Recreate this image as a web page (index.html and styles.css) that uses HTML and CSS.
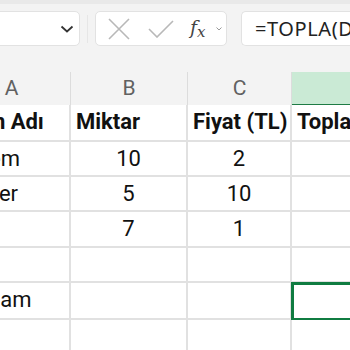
FILE: index.html
```html
<!DOCTYPE html>
<html>
<head>
    <title>Sheet</title>
    <link rel="stylesheet" href="styles.css">
</head>
<body>
    <div class="app">
        <div class="toolbar">
            <div class="name-box">
                <svg class="chevron" width="14" height="8" viewBox="0 0 14 8">
                    <path d="M1.5 1.5 L7 6.5 L12.5 1.5" fill="none" stroke="#333" stroke-width="1.8"/>
                </svg>
            </div>
            <div class="separator"></div>
            <div class="fx-buttons">
                <svg width="22" height="22" viewBox="0 0 22 22">
                    <path d="M1 1 L21 21 M21 1 L1 21" stroke="#b8b8b8" stroke-width="1.6"/>
                </svg>
                <svg class="check" width="26" height="18" viewBox="0 0 26 18">
                    <path d="M1 9 L9 17 L25 1" fill="none" stroke="#b8b8b8" stroke-width="1.6"/>
                </svg>
                <span class="fx">f<sub>x</sub></span>
                <svg class="mini" width="6" height="4" viewBox="0 0 6 4">
                    <path d="M0.5 0.5 L3 3 L5.5 0.5" fill="none" stroke="#999" stroke-width="1"/>
                </svg>
            </div>
            <div class="formula">=TOPLA(D</div>
        </div>

        <div class="sheet">
            <div class="grid">
                <div class="col-head">A</div>
                <div class="col-head">B</div>
                <div class="col-head">C</div>
                <div class="col-head selected"></div>

                <div class="cell bold left">Ürün Adı</div>
                <div class="cell bold left">Miktar</div>
                <div class="cell bold left">Fiyat (TL)</div>
                <div class="cell bold left">Toplam</div>

                <div class="cell left">Kalem</div>
                <div class="cell">10</div>
                <div class="cell">2</div>
                <div class="cell"></div>

                <div class="cell left">Defter</div>
                <div class="cell">5</div>
                <div class="cell">10</div>
                <div class="cell"></div>

                <div class="cell left"></div>
                <div class="cell">7</div>
                <div class="cell">1</div>
                <div class="cell"></div>

                <div class="cell"></div>
                <div class="cell"></div>
                <div class="cell"></div>
                <div class="cell"></div>

                <div class="cell left">Toplam</div>
                <div class="cell"></div>
                <div class="cell"></div>
                <div class="cell active"></div>

                <div class="cell"></div>
                <div class="cell"></div>
                <div class="cell"></div>
                <div class="cell"></div>
            </div>
        </div>
    </div>
</body>
</html>
```

FILE: styles.css
```css
body {
    margin: 0;
    font-family: Roboto, "Noto Sans", sans-serif;
    background-color: #f3f3f3;
    overflow: hidden;
}
.app {
    width: 350px;
    height: 350px;
    overflow: hidden;
    border-top: 4px solid #e9e9e9;
    box-sizing: border-box;
}
.toolbar {
    display: flex;
    align-items: center;
    height: 35px;
    margin-top: 7px;
}
.name-box {
    flex: none;
    width: 100px;
    height: 35px;
    margin-left: -20px;
    box-sizing: border-box;
    background-color: white;
    border: 1px solid #e2e2e2;
    border-radius: 5px;
    display: flex;
    align-items: center;
    justify-content: flex-end;
    padding-right: 5px;
}
.separator {
    flex: none;
    width: 1px;
    height: 28px;
    margin: 0 7px;
    background-color: #e6e6e6;
}
.fx-buttons {
    flex: none;
    width: 132px;
    height: 35px;
    box-sizing: border-box;
    background-color: white;
    border: 1px solid #e2e2e2;
    border-radius: 5px;
    display: flex;
    align-items: center;
    padding-left: 12px;
}
.check {
    margin-left: 18px;
}
.fx {
    margin-left: 16px;
    font-family: "DejaVu Serif", serif;
    font-style: italic;
    font-size: 19px;
    color: #444;
    line-height: 1;
}
.fx sub {
    font-size: 15px;
    vertical-align: -3px;
}
.mini {
    margin-left: 10px;
}
.formula {
    flex: none;
    width: 140px;
    height: 35px;
    margin-left: 14px;
    box-sizing: border-box;
    background-color: white;
    border: 1px solid #e2e2e2;
    border-right: none;
    border-radius: 5px 0 0 5px;
    padding-left: 13px;
    font-family: "Noto Sans", sans-serif;
    font-size: 20px;
    letter-spacing: 0.6px;
    line-height: 33px;
    color: #222;
    white-space: nowrap;
}
.sheet {
    margin-top: 26px;
}
.grid {
    display: grid;
    grid-template-columns: 118px 117px 104px 120px;
    grid-template-rows: 33px 37px 35px 35px 36px 35px 37px 35px;
    margin-left: -47px;
    width: 459px;
}
.col-head {
    border-right: 1px solid #dcdcdc;
    text-align: center;
    font-size: 21px;
    line-height: 33px;
    color: #616161;
}
.col-head.selected {
    background-color: #caead5;
    border-bottom: 2px solid #1e7b45;
    margin-bottom: -1px;
}
.cell {
    background-color: white;
    border-right: 2px solid #e1e1e1;
    border-bottom: 2px solid #e1e1e1;
    font-size: 22px;
    line-height: 34px;
    text-align: center;
    color: #111;
    white-space: nowrap;
    overflow: hidden;
}
.cell.left {
    text-align: left;
    padding-left: 5px;
}
.cell.bold {
    font-weight: bold;
}
.cell.active {
    outline: 3px solid #107c41;
    outline-offset: -2px;
}
```
